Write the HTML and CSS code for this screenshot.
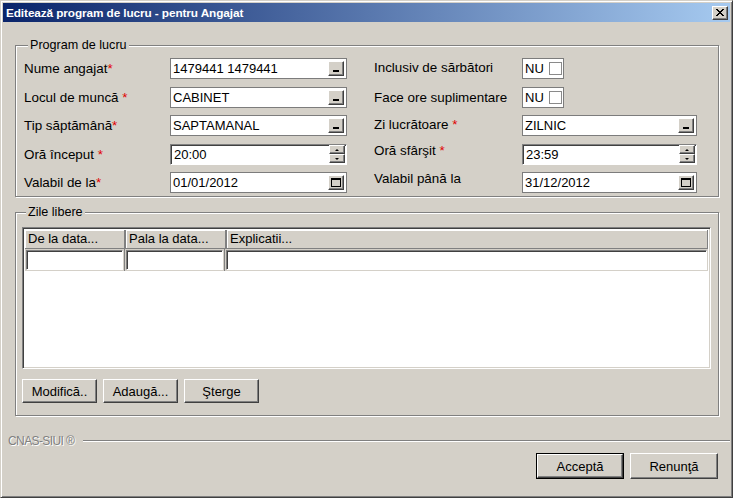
FILE: index.html
```html
<!DOCTYPE html>
<html lang="ro">
<head>
<meta charset="utf-8">
<title>Editează program de lucru - pentru Angajat</title>
<link rel="stylesheet" href="styles.css">
</head>
<body>
<div class="window">
  <div class="titlebar">
    <span class="title">Editează program de lucru - pentru Angajat</span>
    <span class="close">
      <svg width="8" height="7" viewBox="0 0 8 7" shape-rendering="crispEdges">
        <path d="M0 0h2v1h-2z M6 0h2v1h-2z M1 1h2v1h-2z M5 1h2v1h-2z M2 2h4v1h-4z M3 3h2v1h-2z M2 4h4v1h-4z M1 5h2v1h-2z M5 5h2v1h-2z M0 6h2v1h-2z M6 6h2v1h-2z" fill="#000"/>
      </svg>
    </span>
  </div>

  <div class="content">
    <fieldset class="group program">
      <legend>Program de lucru</legend>
      <div class="form">
        <div class="col left">
          <div class="lbl">Nume angajat<span class="req">*</span></div>
          <div class="field"><span class="val">1479441 1479441</span><span class="ibtn drop"><i></i></span></div>

          <div class="lbl">Locul de muncă <span class="req">*</span></div>
          <div class="field"><span class="val">CABINET</span><span class="ibtn drop"><i></i></span></div>

          <div class="lbl">Tip săptămână<span class="req">*</span></div>
          <div class="field"><span class="val">SAPTAMANAL</span><span class="ibtn drop"><i></i></span></div>

          <div class="lbl">Oră început <span class="req">*</span></div>
          <div class="field sunken"><span class="val">20:00</span><span class="spin"><span class="sbtn up"><i></i></span><span class="sbtn down"><i></i></span></span></div>

          <div class="lbl">Valabil de la<span class="req">*</span></div>
          <div class="field"><span class="val">01/01/2012</span><span class="ibtn date"><i></i></span></div>
        </div>

        <div class="col right">
          <div class="lbl up2">Inclusiv de sărbători</div>
          <div class="check"><span>NU</span><span class="box"></span></div>

          <div class="lbl">Face ore suplimentare</div>
          <div class="check"><span>NU</span><span class="box"></span></div>

          <div class="lbl up2">Zi lucrătoare <span class="req">*</span></div>
          <div class="field"><span class="val">ZILNIC</span><span class="ibtn drop"><i></i></span></div>

          <div class="lbl top">Oră sfârşit <span class="req">*</span></div>
          <div class="field sunken"><span class="val">23:59</span><span class="spin"><span class="sbtn up"><i></i></span><span class="sbtn down"><i></i></span></span></div>

          <div class="lbl top">Valabil până la</div>
          <div class="field"><span class="val">31/12/2012</span><span class="ibtn date"><i></i></span></div>
        </div>
      </div>
    </fieldset>

    <fieldset class="group libere">
      <legend>Zile libere</legend>
      <div class="grid">
        <div class="grow head">
          <div class="hcell c1">De la data...</div>
          <div class="hcell c2">Pala la data...</div>
          <div class="hcell c3">Explicatii...</div>
        </div>
        <div class="grow edit">
          <div class="ecell c1"><span class="einput"></span></div>
          <div class="ecell c2"><span class="einput"></span></div>
          <div class="ecell c3"><span class="einput"></span></div>
        </div>
      </div>
      <div class="actions">
        <span class="button small">Modifică..</span>
        <span class="button small">Adaugă...</span>
        <span class="button small">Şterge</span>
      </div>
    </fieldset>
  </div>

  <div class="brand">
    <span class="brand-text">CNAS-SIUI ®</span>
    <span class="rule"></span>
  </div>

  <div class="footer">
    <span class="button big default"><span>Acceptă</span></span>
    <span class="button big">Renunţă</span>
  </div>
</div>
</body>
</html>
```

FILE: styles.css
```css
* { box-sizing: border-box; }

html, body {
  margin: 0;
  padding: 0;
}

body {
  width: 733px;
  height: 498px;
  overflow: hidden;
  background: #d4d0c8;
  font-family: "Liberation Sans", Arial, sans-serif;
  font-size: 13px;
  color: #000;
}

.window {
  width: 733px;
  height: 498px;
  background: #d4d0c8;
  border: 1px solid;
  border-color: #d4d0c8 #404040 #404040 #d4d0c8;
  box-shadow: inset 1px 1px 0 #fff, inset -1px -1px 0 #808080;
  padding: 2px;
  display: flex;
  flex-direction: column;
}

/* title bar */
.titlebar {
  height: 19px;
  flex: none;
  background: linear-gradient(to right, #0a246a, #a6caf0);
  display: flex;
  align-items: center;
  justify-content: space-between;
  padding: 0 2px 0 3px;
}

.title {
  color: #fff;
  font-weight: bold;
  font-size: 11.8px;
  letter-spacing: -0.1px;
  white-space: nowrap;
}

.close {
  width: 16px;
  height: 14px;
  background: #d4d0c8;
  border: 1px solid;
  border-color: #fff #404040 #404040 #fff;
  box-shadow: inset -1px -1px 0 #808080;
  display: flex;
  align-items: center;
  justify-content: center;
  padding-right: 1px;
}

.close svg { display: block; }

/* content */
.content {
  padding: 16px 0 0 12px;
  display: flex;
  flex-direction: column;
}

.group {
  margin: 0;
  width: 704px;
  min-width: 0;
  border: 1px solid #808080;
  box-shadow: 1px 1px 0 #fff, inset 1px 1px 0 #fff;
}

.group legend {
  margin-left: 4px;
  padding: 0 2px 0 2px;
  line-height: 15px;
  font-size: 12.6px;
  background: #d4d0c8;
}

.program {
  padding: 5px 21px 3px 8px;
}

.form {
  display: flex;
  gap: 27px;
}

.col {
  display: grid;
  grid-auto-rows: 21px;
  row-gap: 7.5px;
  align-items: center;
}

.col.left { grid-template-columns: 146px 177px; }
.col.right { grid-template-columns: 148px 175px; }

.lbl {
  font-size: 13.4px;
  line-height: 15px;
  white-space: nowrap;
}

.lbl.up2 { margin-top: -3px; }
.lbl.top { align-self: start; margin-top: -1px; }

.req { color: #e00000; }

.field {
  height: 21px;
  background: #fff;
  border: 1px solid #7c7c7c;
  display: flex;
  align-items: center;
  justify-content: space-between;
  padding: 0 2px 0 2px;
}

.field.sunken {
  border: 1px solid;
  border-color: #808080 #fff #fff #808080;
  box-shadow: inset 1px 1px 0 #404040;
  padding-left: 3px;
  padding-right: 1px;
}

.val {
  font-size: 13px;
  line-height: 15px;
  white-space: nowrap;
}

.ibtn {
  width: 16px;
  height: 15px;
  background: #d4d0c8;
  border: 1px solid;
  border-color: #fff #404040 #404040 #fff;
  box-shadow: inset -1px -1px 0 #808080;
  display: flex;
  justify-content: center;
}

.ibtn.drop { align-items: flex-end; padding-bottom: 3px; }
.ibtn.drop i {
  display: block;
  width: 6px;
  height: 2px;
  background: #000;
}

.ibtn.date { align-items: center; }
.ibtn.date i {
  display: block;
  width: 10px;
  height: 9px;
  border: 1px solid #000;
  border-top-width: 2px;
}

.spin {
  display: flex;
  flex-direction: column;
  width: 16px;
  height: 18px;
}

.sbtn {
  flex: 1;
  background: #d4d0c8;
  border: 1px solid;
  border-color: #fff #404040 #404040 #fff;
  box-shadow: inset -1px -1px 0 #808080;
  display: flex;
  align-items: center;
  justify-content: center;
}

.sbtn i {
  display: block;
  width: 0;
  height: 0;
  border-left: 2px solid transparent;
  border-right: 2px solid transparent;
}

.sbtn.up i { border-bottom: 2px solid #000; }
.sbtn.down i { border-top: 2px solid #000; }

.check {
  width: 42px;
  height: 21px;
  background: #fff;
  border: 1px solid #7c7c7c;
  display: flex;
  align-items: center;
  justify-content: space-between;
  padding: 0 1px 0 2px;
  font-size: 13px;
}

.check .box {
  width: 13px;
  height: 13px;
  border: 1px solid #8a8a8a;
  background: #fff;
}

/* zile libere */
.libere {
  margin-top: 8px;
  padding: 7px 7px 12px 6px;
}

.grid {
  width: 689px;
  height: 142px;
  background: #fff;
  border: 1px solid;
  border-color: #808080 #fff #fff #808080;
  box-shadow: inset 1px 1px 0 #404040, inset -1px -1px 0 #d4d0c8;
  padding: 2px;
}

.grow {
  display: flex;
}

.c1 { width: 100px; }
.c2 { width: 100px; }
.c3 { flex: 1; }

.head { height: 19px; background: #808080; }

.hcell {
  height: 19px;
  background: #d4d0c8;
  border-right: 1px solid #808080;
  border-bottom: 1px solid #808080;
  box-shadow: inset 1px 1px 0 #fff;
  margin-right: 1px;
  padding: 0 3px;
  font-size: 13px;
  line-height: 18px;
  white-space: nowrap;
  color: #000;
}

.hcell.c3 { margin-right: 0; }

.edit {
  height: 22px;
  background: #d4d0c8;
}

.ecell {
  padding: 1px;
  border-right: 1px solid #808080;
}

.ecell.c3 { border-right: none; }

.einput {
  display: block;
  height: 20px;
  background: #fff;
  border: 1px solid;
  border-color: #808080 #fff #fff #808080;
  box-shadow: inset 1px 1px 0 #404040;
}

.actions {
  display: flex;
  gap: 6px;
  margin-top: 10px;
}

.button {
  display: flex;
  align-items: center;
  justify-content: center;
  background: #d4d0c8;
  border: 1px solid;
  border-color: #fff #404040 #404040 #fff;
  box-shadow: inset -1px -1px 0 #808080;
  font-size: 13px;
  white-space: nowrap;
}

.button.small {
  width: 75px;
  height: 24px;
}

/* brand / footer */
.brand {
  display: flex;
  align-items: center;
  margin-top: 18px;
  padding-left: 5px;
}

.brand-text {
  color: #808080;
  text-shadow: 1px 1px 0 #fff;
  font-size: 12px;
  letter-spacing: -0.6px;
  white-space: nowrap;
  line-height: 14px;
}

.rule {
  flex: 1;
  margin-left: 9px;
  height: 2px;
  border-top: 1px solid #808080;
  border-bottom: 1px solid #fff;
}

.footer {
  display: flex;
  justify-content: flex-end;
  gap: 6px;
  margin-top: 5px;
  padding-right: 12px;
}

.button.big {
  width: 88px;
  height: 26px;
}

.button.default {
  border: 1px solid #000;
  box-shadow: none;
  padding: 0;
}

.button.default span {
  width: 100%;
  height: 100%;
  display: flex;
  align-items: center;
  justify-content: center;
  border: 1px solid;
  border-color: #fff #404040 #404040 #fff;
  box-shadow: inset -1px -1px 0 #808080;
}
```
